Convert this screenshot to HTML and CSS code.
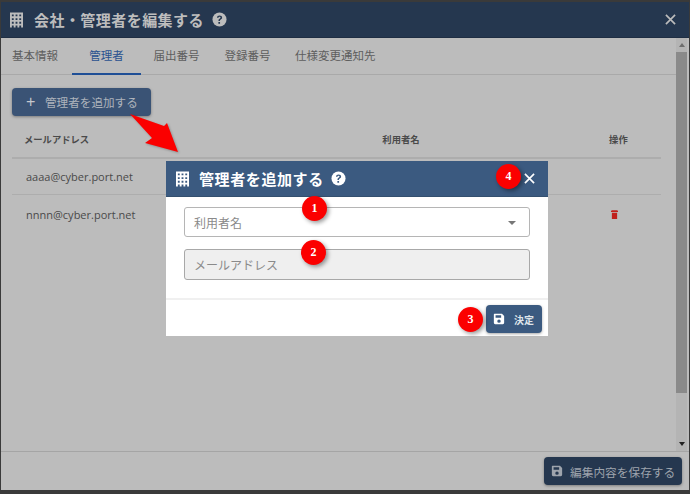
FILE: index.html
```html
<!DOCTYPE html>
<html lang="ja">
<head>
<meta charset="utf-8">
<title>会社・管理者を編集する</title>
<link rel="stylesheet" href="styles.css">
</head>
<body>
<svg class="defs" width="0" height="0" aria-hidden="true">
  <symbol id="building" viewBox="0 0 14 16"><path fill="currentColor" fill-rule="evenodd" d="M0 0h14v16H0zM2 2v2h2V2zm4 0v2h2V2zm4 0v2h2V2zM2 6v2h2V6zm4 0v2h2V6zm4 0v2h2V6zM2 10v2h2v-2zm4 0v2h2v-2zm4 0v2h2v-2zM2 14v2h2v-2zm4 0v2h2v-2zm4 0v2h2v-2z"/></symbol>
  <symbol id="help" viewBox="0 0 16 16"><circle cx="8" cy="8" r="7.500" fill="currentColor"/><path d="M5.300 6.200C5.400 4.600 6.500 3.700 8.100 3.700c1.600 0 2.700.9 2.700 2.200 0 1-.5 1.600-1.400 2.100-.7.4-.9.7-.9 1.300v.3H6.900v-.5c0-1 .4-1.500 1.200-2 .7-.4 1-.7 1-1.200 0-.5-.4-.8-1-.8-.7 0-1.100.4-1.200 1.100zM6.800 10.700h1.800v1.700H6.800z" fill="var(--q)"/></symbol>
  <symbol id="close" viewBox="0 0 12 12"><path d="M1 1l10 10M11 1L1 11" stroke="currentColor" stroke-width="1.800" fill="none"/></symbol>
  <symbol id="save" viewBox="0 0 14 14"><path fill="currentColor" fill-rule="evenodd" d="M1.500 1H10.500L13 3.500V11.500A1.500 1.500 0 0 1 11.500 13H2.500A1.500 1.500 0 0 1 1 11.500V1.500zM3 2.500V5.500H9.500V2.500zM7 7.500A2 2 0 1 0 7 11.500 2 2 0 1 0 7 7.500z"/></symbol>
</svg>

<div class="window">
  <header class="win-head">
    <svg class="ico-building"><use href="#building"/></svg>
    <h1 class="win-title">会社・管理者を編集する</h1>
    <svg class="ico-help win-help"><use href="#help"/></svg>
    <svg class="ico-close win-close"><use href="#close"/></svg>
  </header>
  <div class="win-main">
    <div class="content">
      <nav class="tabs">
        <span class="tab">基本情報</span>
        <span class="tab tab-active">管理者</span>
        <span class="tab">届出番号</span>
        <span class="tab">登録番号</span>
        <span class="tab">仕様変更通知先</span>
      </nav>
      <div class="panel">
        <button class="btn btn-add"><span class="plus">+</span>管理者を追加する</button>
        <div class="table">
          <div class="row row-head"><span class="c-mail">メールアドレス</span><span class="c-user">利用者名</span><span class="c-op">操作</span></div>
          <div class="row row-one"><span class="c-mail">aaaa@cyber.port.net</span><span class="c-user"></span><span class="c-op"></span></div>
          <div class="row row-two"><span class="c-mail">nnnn@cyber.port.net</span><span class="c-user"></span><span class="c-op"><svg class="trash" viewBox="0 0 8 10"><path fill="#c0201c" d="M1 0h6l1 1v1H0V1zM1 3h6v7H1z"/></svg></span></div>
        </div>
      </div>
    </div>
    <div class="scrollbar">
      <span class="sb-btn"><i class="tri-up"></i></span>
      <span class="sb-thumb"></span>
      <span class="sb-btn sb-btn-end"><i class="tri-down"></i></span>
    </div>
  </div>
  <footer class="win-foot">
    <button class="btn btn-save"><svg class="ico-save"><use href="#save"/></svg>編集内容を保存する</button>
  </footer>
</div>

<svg class="arrow" viewBox="0 0 60 50"><polygon points="1,1 35,13 38,10 49,39 16,30 23,25" fill="#fb0000"/></svg>

<section class="dialog">
  <header class="dlg-head">
    <svg class="ico-building dlg-building"><use href="#building"/></svg>
    <h2 class="dlg-title">管理者を追加する</h2>
    <svg class="ico-help dlg-help"><use href="#help"/></svg>
    <svg class="ico-close dlg-close"><use href="#close"/></svg>
  </header>
  <div class="dlg-body">
    <div class="field"><span>利用者名</span><i class="caret"></i></div>
    <div class="field field-off"><span>メールアドレス</span></div>
  </div>
  <footer class="dlg-foot">
    <button class="btn btn-ok"><svg class="ico-save"><use href="#save"/></svg>決定</button>
  </footer>
</section>

<span class="badge b1">1</span>
<span class="badge b2">2</span>
<span class="badge b3">3</span>
<span class="badge b4">4</span>
</body>
</html>
```
FILE: styles.css
```css
* { box-sizing: border-box; }
html, body { margin: 0; height: 100%; }
body {
  position: relative;
  width: 690px;
  height: 494px;
  overflow: hidden;
  background: #3a3a3a;
  padding: 2px 1px 4px 1px;
  font-family: "Open Sans", "Noto Sans CJK JP", sans-serif;
  color: #4a4a4a;
}
.defs { position: absolute; }
.window {
  display: flex;
  flex-direction: column;
  height: 488px;
  background: #bcbcbc;
}
.win-head {
  display: flex;
  align-items: center;
  height: 36px;
  flex: none;
  padding: 0 13px 0 9px;
  background: #25374f;
  color: #bcbcbc;
  border-bottom: 1px solid #1f2e43;
}
.ico-building { width: 13px; height: 16px; flex: none; }
.win-title { margin: 0 0 0 11px; font-size: 15px; font-weight: 700; line-height: 1; letter-spacing: .45px; color: #bdbdbd; font-family: "Noto Sans CJK JP", sans-serif; }
.ico-help { width: 15px; height: 15px; flex: none; }
.win-help { margin-left: 8px; --q: #25374f; }
.ico-close { width: 11px; height: 11px; flex: none; }
.win-close { margin-left: auto; }
.win-main { flex: 1; display: flex; min-height: 0; }
.content { flex: 1; min-width: 0; }
.tabs {
  display: flex;
  height: 37px;
  border-bottom: 1px solid #a9a9a9;
  font-size: 11.500px;
  color: #5e5e5e;
  font-family: "Noto Sans CJK JP", sans-serif;
}
.tab { padding: 0 12px; line-height: 34px; width: 71px; text-align: center; white-space: nowrap; }
.tab:first-child { width: 71px; padding-left: 11px; text-align: left; }
.tab:last-child { width: auto; padding-left: 12px; }
.tab-active { width: 69px; color: #2a5290; border-bottom: 2px solid #1f4f96; height: 37px; }
.panel { padding: 13px 15px 0 11px; }
.btn {
  display: inline-flex;
  align-items: center;
  border: 0;
  border-radius: 4px;
  font-family: "Noto Sans CJK JP", sans-serif;
  box-shadow: 0 1px 3px rgba(0,0,0,.35);
}
.btn-add { width: 139px; height: 28px; padding: 0 0 0 14px; background: #3a5375; color: #aeb4bc; font-size: 11.600px; }
.plus { width: 19px; font-size: 16px; line-height: 1; color: #c5c8cc; font-family: "Liberation Sans", sans-serif; text-align: left; }
.table { margin-top: 4px; font-size: 11px; }
.row { display: flex; align-items: center; border-bottom: 1px solid #adadad; }
.row-head { height: 39px; font-weight: 700; font-size: 9.300px; font-family: "Noto Sans CJK JP", sans-serif; border-bottom-width: 2px; }
.row-one { height: 36px; }
.row-two { height: 38px; border-bottom: 0; }
.c-mail { width: 340px; padding-left: 14px; white-space: nowrap; }
.row-head .c-mail { padding-left: 12px; }
.c-user { width: 150px; padding-left: 31px; }
.c-op { width: 160px; padding-left: 108px; }
.row-two .c-op { padding-left: 110px; }
.trash { display: block; width: 7px; height: 9px; }
.scrollbar { width: 11px; flex: none; margin-right: 2px; display: flex; flex-direction: column; background: #b4b4b4; }
.sb-btn { height: 14px; flex: none; display: flex; align-items: center; justify-content: center; }
.sb-thumb { flex: 1; background: #8a8a8a; margin-bottom: 44px; }
.tri-up, .tri-down { width: 0; height: 0; border-left: 3.500px solid transparent; border-right: 3.500px solid transparent; }
.tri-up { border-bottom: 4px solid #6e6e6e; }
.tri-down { border-top: 4px solid #222; }
.win-foot {
  flex: none;
  height: 39px;
  display: flex;
  justify-content: flex-end;
  align-items: center;
  padding: 0 7px 0 0;
  border-top: 1px solid #a5a5a5;
}
.btn-save { width: 138px; height: 28px; padding: 0 0 0 7px; background: #25374f; color: #9ea4ad; font-size: 11.700px; }
.ico-save { width: 12px; height: 12px; flex: none; margin-right: 7px; }

.arrow { position: absolute; left: 129px; top: 113px; width: 60px; height: 50px; filter: drop-shadow(1px 1px 1px rgba(0,0,0,.25)); }

.dialog {
  position: absolute;
  left: 166px;
  top: 161px;
  width: 382px;
  height: 175px;
  background: #fff;
  display: flex;
  flex-direction: column;
  font-family: "Noto Sans CJK JP", sans-serif;
}
.dlg-head {
  height: 36px;
  flex: none;
  display: flex;
  align-items: center;
  padding: 0 13px 0 10px;
  background: #3b5a80;
  color: #fff;
  border-bottom: 1px solid #34506f;
}
.dlg-building { width: 13px; height: 16px; }
.dlg-title { margin: 0 0 0 10px; font-size: 15px; font-weight: 700; line-height: 1; letter-spacing: .6px; }
.dlg-help { margin-left: 7px; --q: #3b5a80; }
.dlg-close { margin-left: auto; width: 11px; height: 11px; }
.dlg-body { flex: 1; padding: 10px 18px 0 18px; display: flex; flex-direction: column; gap: 12px; border-bottom: 2px solid #f0f0f0; }
.field {
  height: 30px;
  flex: none;
  display: flex;
  align-items: center;
  justify-content: space-between;
  padding: 0 13px 0 9px;
  border: 1px solid #b5b5b5;
  border-radius: 3px;
  font-size: 12px;
  color: #8a8a8a;
}
.field-off { height: 31px; background: #efefef; border-color: #a8a8a8; padding-bottom: 1px; }
.caret { width: 0; height: 0; border-left: 4px solid transparent; border-right: 4px solid transparent; border-top: 4px solid #777; margin-top: 2px; }
.dlg-foot { flex: none; height: 36px; display: flex; justify-content: flex-end; align-items: center; padding: 2px 6px 0 0; }
.btn-ok { width: 56px; height: 28px; padding: 0 0 0 7px; background: #3b5a80; color: #dfe4ea; font-size: 10px; font-weight: 700; }
.btn-ok .ico-save { margin-right: 9px; color: #fff; }

.badge {
  position: absolute;
  width: 25px;
  height: 25px;
  border-radius: 50%;
  background: #fb0000;
  color: #fff;
  font: 700 12px/25px "Liberation Serif", serif;
  text-align: center;
  box-shadow: 2px 2px 4px rgba(0,0,0,.4);
}
.b1 { left: 302px; top: 196px; }
.b2 { left: 301px; top: 240px; }
.b3 { left: 458px; top: 307px; }
.b4 { left: 496px; top: 164px; }
```
